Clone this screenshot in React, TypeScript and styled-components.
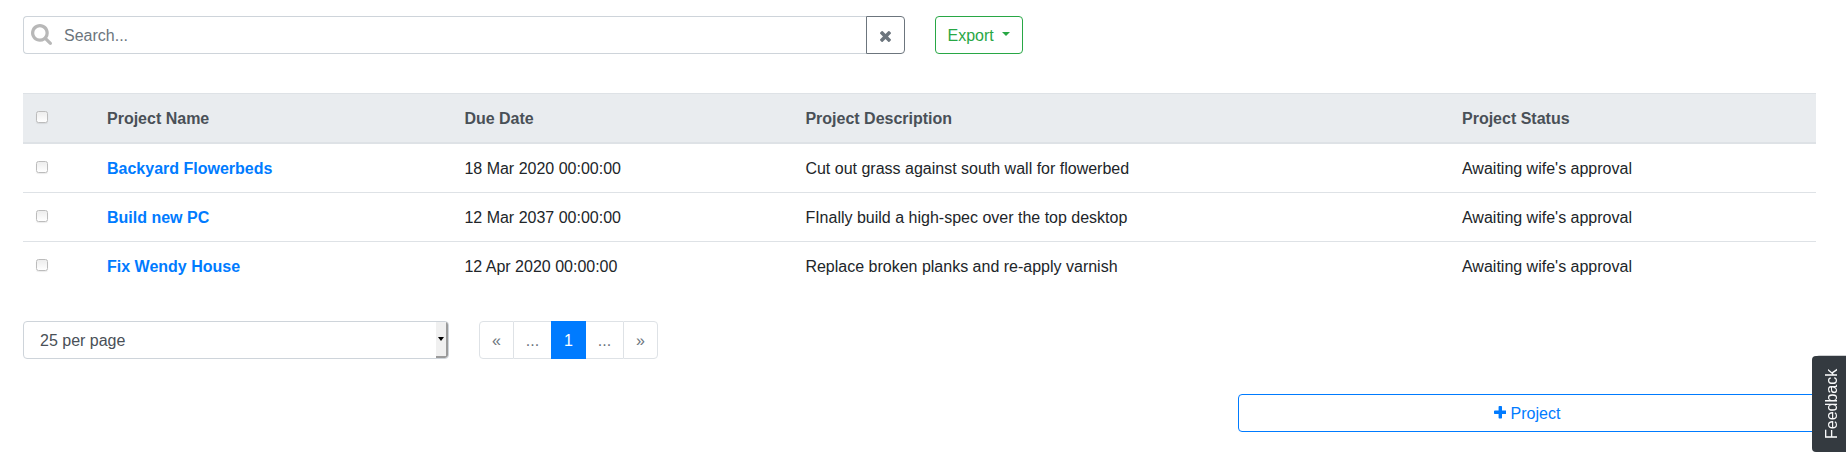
import React from "react";
import styled, { createGlobalStyle } from "styled-components";

const Global = createGlobalStyle`
  *, *::before, *::after { box-sizing: border-box; }
  body {
    margin: 0;
    background: #fff;
    color: #212529;
    font: 16px/24px "Liberation Sans", Arial, sans-serif;
    overflow: hidden;
  }
  button, input { font: inherit; margin: 0; }
`;

const Page = styled.main`
  display: flex;
  flex-direction: column;
  height: 456px;
  padding: 16px 30px 0 23px;
`;

const Toolbar = styled.div`
  display: flex;
  gap: 30px;
  height: 38px;
`;

const SearchGroup = styled.div`
  display: flex;
  width: 882px;
`;

const SearchField = styled.label`
  display: flex;
  flex: 1;
  align-items: center;
  padding-left: 7px;
  border: 1px solid #ced4da;
  border-right: 0;
  border-radius: 4px 0 0 4px;

  svg { display: block; margin-top: -1px; }
`;

const SearchInput = styled.input`
  flex: 1;
  margin-left: 12px;
  padding: 2px 0 0;
  border: 0;
  outline: 0;
  height: 26px;
  background: transparent;
  &::placeholder { color: #6c757d; opacity: 1; }
`;

const Button = styled.button<{ $color: string }>`
  display: flex;
  align-items: center;
  justify-content: center;
  height: 38px;
  padding: 2px 12px 0;
  border: 1px solid ${(p) => p.$color};
  border-radius: 4px;
  background: #fff;
  color: ${(p) => p.$color};
`;

const ClearButton = styled(Button)`
  width: 39px;
  padding: 2px 0 0;
  border-radius: 0 4px 4px 0;
`;

const ExportButton = styled(Button)`
  width: 88px;
  justify-content: flex-start;
  padding-left: 11.5px;
  &::after {
    content: "";
    margin: -4px 0 0 8px;
    border: 4.8px solid transparent;
    border-top-color: currentColor;
    border-bottom: 0;
  }
`;

const ProjectButton = styled(Button)`
  width: 578px;
  margin: 35px 0 0 auto;
  svg { margin: -3px 4.4px 0 0; }
`;

const Table = styled.div`
  margin-top: 39px;
`;

const Row = styled.div`
  display: grid;
  grid-template-columns: 72px 357.4px 341px 656.6px 1fr;
  height: 49px;
  padding: 13px 0 0;
  border-top: 1px solid #dee2e6;
  > * { padding-left: 12px; }
  &:nth-child(2) { border-top: 0; height: 48px; }
`;

const HeadRow = styled(Row)`
  height: 51px;
  border-bottom: 2px solid #dee2e6;
  background: #e9ecef;
  color: #495057;
  font-weight: 700;
`;

const ProjectLink = styled.a`
  color: #007bff;
  font-weight: 700;
`;

const Check = styled.input.attrs({ type: "checkbox" })`
  appearance: none;
  display: block;
  width: 12px;
  height: 12px;
  margin: 4px 0 0 1px;
  border: 1px solid #bcbcbc;
  border-radius: 2.5px;
  background: linear-gradient(#ededed, #fff);
  box-shadow: 0 1px 1px rgba(0, 0, 0, 0.08);
`;

const Footer = styled.div`
  display: flex;
  gap: 30px;
  height: 38px;
  margin-top: 31px;
`;

const PageSize = styled.div`
  display: flex;
  justify-content: space-between;
  width: 426px;
  padding-left: 16px;
  border: 1px solid #ced4da;
  border-radius: 4px;
  color: #495057;
  line-height: 38px;
  overflow: hidden;
`;

const SelectArrow = styled.span`
  display: flex;
  align-items: center;
  justify-content: center;
  width: 12px;
  height: 36px;
  border-right: 2px solid #9b9b9b;
  border-bottom: 2px solid #9b9b9b;
  border-radius: 0 0 3px 0;
  background: #f0f0f0;
  &::before {
    content: "";
    border: 3px solid transparent;
    border-top: 4px solid #000;
    border-bottom: 0;
  }
`;

const Pagination = styled.nav`
  display: flex;
`;

const PageItem = styled.span<{ $width: number; $active?: boolean }>`
  width: ${(p) => p.$width}px;
  height: 38px;
  border: 1px solid ${(p) => (p.$active ? "#007bff" : "#dee2e6")};
  border-left-width: ${(p) => (p.$active ? 1 : 0)}px;
  border-right-width: ${(p) => (p.$active ? 1 : 0)}px;
  background: ${(p) => (p.$active ? "#007bff" : "#fff")};
  color: ${(p) => (p.$active ? "#fff" : "#6c757d")};
  line-height: 38px;
  text-align: center;
  &:first-child { border-left-width: 1px; border-right-width: 1px; border-radius: 4px 0 0 4px; }
  &:last-child { border-left-width: 1px; border-right-width: 1px; border-radius: 0 4px 4px 0; }
`;

const Feedback = styled.button`
  position: fixed;
  right: 0;
  top: 356px;
  width: 34px;
  height: 96px;
  padding: 0;
  border: 0;
  border-radius: 4px 0 0 4px;
  background: #343a40;
  box-shadow: 4px -1px 0 #ced0d2;
  color: #f8f9fa;
  writing-mode: vertical-rl;
  span { display: block; width: 40px; margin-right: -6px; line-height: 40px; transform: rotate(180deg); }
`;

const projects = [
  ["Backyard Flowerbeds", "18 Mar 2020 00:00:00", "Cut out grass against south wall for flowerbed"],
  ["Build new PC", "12 Mar 2037 00:00:00", "FInally build a high-spec over the top desktop"],
  ["Fix Wendy House", "12 Apr 2020 00:00:00", "Replace broken planks and re-apply varnish"],
];

const CheckCell = () => <div><Check /></div>;

export default function App() {
  return (
    <Page>
      <Global />
      <Toolbar>
        <SearchGroup>
          <SearchField>
            <svg width="21" height="21" viewBox="64 128 1664 1664" fill="#b8b8b8">
              <path d="M1216 832q0-185-131.5-316.5t-316.5-131.5-316.5 131.5-131.5 316.5 131.5 316.5 316.5 131.5 316.5-131.5 131.5-316.5zm512 832q0 52-38 90t-90 38q-54 0-90-38l-343-342q-179 124-399 124-143 0-273.5-55.5t-225-150-150-225-55.5-273.5 55.5-273.5 150-225 225-150 273.5-55.5 273.5 55.5 225 150 150 225 55.5 273.5q0 220-124 399l343 343q37 37 37 90z" />
            </svg>
            <SearchInput placeholder="Search..." />
          </SearchField>
          <ClearButton $color="#6c757d" aria-label="Clear">
            <svg width="11" height="11" viewBox="302 366 1188 1188" fill="currentColor">
              <path d="M1490 1322q0 40-28 68l-136 136q-28 28-68 28t-68-28l-294-294-294 294q-28 28-68 28t-68-28l-136-136q-28-28-28-68t28-68l294-294-294-294q-28-28-28-68t28-68l136-136q28-28 68-28t68 28l294 294 294-294q28-28 68-28t68 28l136 136q28 28 28 68t-28 68l-294 294 294 294q28 28 28 68z" />
            </svg>
          </ClearButton>
        </SearchGroup>
        <ExportButton $color="#28a745">Export</ExportButton>
      </Toolbar>
      <Table>
        <HeadRow>
          <CheckCell />
          <div>Project Name</div>
          <div>Due Date</div>
          <div>Project Description</div>
          <div>Project Status</div>
        </HeadRow>
        {projects.map(([name, due, description]) => (
          <Row key={name}>
            <CheckCell />
            <ProjectLink>{name}</ProjectLink>
            <div>{due}</div>
            <div>{description}</div>
            <div>Awaiting wife's approval</div>
          </Row>
        ))}
      </Table>
      <Footer>
        <PageSize>25 per page<SelectArrow /></PageSize>
        <Pagination>
          <PageItem $width={35}>«</PageItem>
          <PageItem $width={37}>...</PageItem>
          <PageItem $width={35} $active>1</PageItem>
          <PageItem $width={37}>...</PageItem>
          <PageItem $width={35}>»</PageItem>
        </Pagination>
      </Footer>
      <ProjectButton $color="#007bff">
        <svg width="12.6" height="12.6" viewBox="192 128 1408 1408" fill="currentColor">
          <path d="M1600 736v192q0 40-28 68t-68 28h-416v416q0 40-28 68t-68 28h-192q-40 0-68-28t-28-68v-416h-416q-40 0-68-28t-28-68v-192q0-40 28-68t68-28h416v-416q0-40 28-68t68-28h192q40 0 68 28t28 68v416h416q40 0 68 28t28 68z" />
        </svg>
        Project
      </ProjectButton>
      <Feedback><span>Feedback</span></Feedback>
    </Page>
  );
}
